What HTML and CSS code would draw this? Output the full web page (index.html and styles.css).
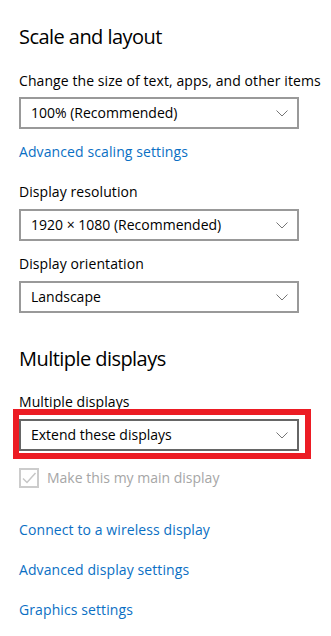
FILE: index.html
```html
<!DOCTYPE html>
<html lang="en">
<head>
<meta charset="utf-8">
<title>Display settings</title>
<link rel="stylesheet" href="styles.css">
</head>
<body>
<main class="page">
  <h2 class="heading heading-first">Scale and layout</h2>
  <div class="label label-after-heading">Change the size of text, apps, and other items</div>
  <div class="select">
    <span class="select-text">100% (Recommended)</span>
    <svg class="chevron" width="12" height="7" viewBox="0 0 12 7"><polyline points="0.5,0.5 6,6 11.5,0.5" fill="none" stroke="#767676" stroke-width="1"/></svg>
  </div>
  <a class="link link-after-select" href="#">Advanced scaling settings</a>
  <div class="label label-after-link">Display resolution</div>
  <div class="select">
    <span class="select-text">1920 × 1080 (Recommended)</span>
    <svg class="chevron" width="12" height="7" viewBox="0 0 12 7"><polyline points="0.5,0.5 6,6 11.5,0.5" fill="none" stroke="#767676" stroke-width="1"/></svg>
  </div>
  <div class="label label-after-select">Display orientation</div>
  <div class="select">
    <span class="select-text">Landscape</span>
    <svg class="chevron" width="12" height="7" viewBox="0 0 12 7"><polyline points="0.5,0.5 6,6 11.5,0.5" fill="none" stroke="#767676" stroke-width="1"/></svg>
  </div>

  <h2 class="heading heading-second">Multiple displays</h2>
  <div class="label label-after-heading2">Multiple displays</div>
  <div class="select select-focus">
    <span class="select-text">Extend these displays</span>
    <svg class="chevron" width="12" height="7" viewBox="0 0 12 7"><polyline points="0.5,0.5 6,6 11.5,0.5" fill="none" stroke="#767676" stroke-width="1"/></svg>
    <div class="highlight"></div>
  </div>
  <label class="check-row">
    <span class="checkbox">
      <svg width="16" height="16" viewBox="0 0 16 16"><polyline points="2,8.5 6,12.5 14.5,3" fill="none" stroke="#c6c6c6" stroke-width="1.5"/></svg>
    </span>
    <span class="check-text">Make this my main display</span>
  </label>

  <a class="link link-first-bottom" href="#">Connect to a wireless display</a>
  <a class="link link-bottom" href="#">Advanced display settings</a>
  <a class="link link-bottom" href="#">Graphics settings</a>
</main>
</body>
</html>
```

FILE: styles.css
```css
html, body {
  margin: 0;
  padding: 0;
  background: #ffffff;
}

body {
  font-family: "Open Sans", "Noto Sans", "Liberation Sans", sans-serif;
  color: #000000;
  width: 331px;
  height: 636px;
  overflow: hidden;
}

.page {
  display: flex;
  flex-direction: column;
  align-items: flex-start;
  padding-left: 19px;
}

.heading {
  margin: 0;
  font-size: 20px;
  font-weight: 400;
  line-height: 28px;
  height: 28px;
  letter-spacing: -0.55px;
}

.heading-first { margin-top: 23px; }
.heading-second { margin-top: 32px; }

.label {
  font-size: 14px;
  line-height: 20px;
  height: 20px;
  white-space: nowrap;
  letter-spacing: 0.08px;
}

.label-after-heading { margin-top: 20px; margin-bottom: 6px; }
.label-after-heading2 { margin-top: 19px; margin-bottom: 7px; }
.label-after-link { margin-top: 20px; margin-bottom: 7px; }
.label-after-select { margin-top: 13px; margin-bottom: 7px; }

.select {
  position: relative;
  box-sizing: border-box;
  width: 280px;
  height: 32px;
  border: 2px solid #999999;
  display: flex;
  align-items: center;
  justify-content: space-between;
  padding: 0 9px 0 10px;
}

.select-focus {
  border-color: #666666;
}

.select-text {
  font-size: 14px;
  line-height: 20px;
  white-space: nowrap;
}

.chevron {
  display: block;
  margin-top: 1px;
}

.highlight {
  position: absolute;
  left: -8px;
  right: -14px;
  top: -12px;
  bottom: -10px;
  border: 6px solid #ec1c24;
  pointer-events: none;
}

.link {
  display: block;
  font-size: 14px;
  line-height: 20px;
  height: 20px;
  color: #0a6fc4;
  text-decoration: none;
  white-space: nowrap;
  letter-spacing: 0.1px;
}

.link-after-select { margin-top: 13px; }
.link-first-bottom { margin-top: 32px; }
.link-bottom { margin-top: 20px; }

.check-row {
  display: flex;
  align-items: center;
  gap: 8px;
  margin-top: 17px;
  height: 20px;
}

.checkbox {
  box-sizing: border-box;
  width: 20px;
  height: 20px;
  border: 2px solid #cccccc;
  display: flex;
  align-items: center;
  justify-content: center;
}

.checkbox svg { display: block; }

.check-text {
  font-size: 14px;
  line-height: 20px;
  color: #a6a6a6;
  white-space: nowrap;
}
```
